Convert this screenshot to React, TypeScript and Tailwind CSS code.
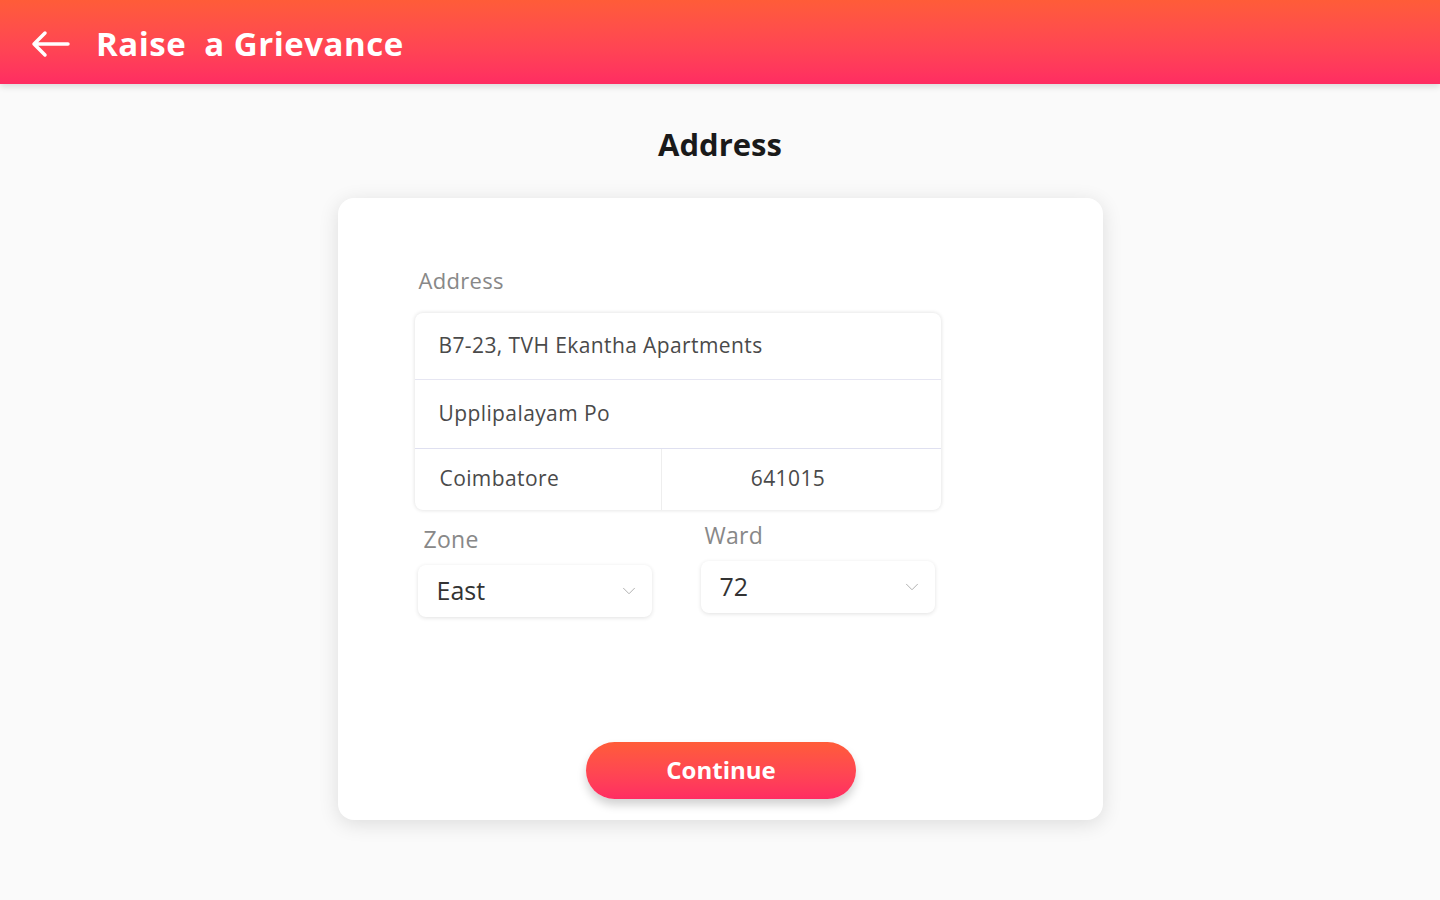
import { ChevronDown } from "lucide-react";

const font = { fontFamily: '"Open Sans", "Noto Sans", sans-serif' };

function Select({ value }: { value: string }) {
  return (
    <div className="flex h-[52px] w-[234px] items-center justify-between rounded-lg bg-white pl-[19px] pr-[12px] shadow-[0_1px_4px_rgba(0,0,0,0.12)]">
      <span className="text-[25px] text-[#333]">{value}</span>
      <ChevronDown size={22} strokeWidth={1} className="text-[#aaa]" />
    </div>
  );
}

export default function App() {
  return (
    <div className="min-h-[900px] bg-[#fafafa]" style={font}>
      <header className="flex h-[84px] items-center gap-[26px] bg-gradient-to-b from-[#ff5c38] to-[#ff2c62] pl-[30px] pt-[4px] shadow-[0_3px_6px_rgba(0,0,0,0.12)]">
        <svg width="40" height="28" viewBox="0 0 40 28" fill="none" stroke="white" strokeWidth="3.5" strokeLinecap="round" strokeLinejoin="round">
          <path d="M38 14H4M15 3L4 14l11 11" />
        </svg>
        <h1 className="text-[33px] font-bold tracking-[0.5px] text-white">Raise&nbsp; a Grievance</h1>
      </header>

      <h2 className="mt-[37px] text-center text-[31px] font-bold text-[#1a1a1a]">Address</h2>

      <div className="mx-auto mt-[30px] flex h-[622px] w-[765px] flex-col rounded-[16px] bg-white pl-[77px] pt-[66px] shadow-[0_4px_20px_rgba(0,0,0,0.12)]">
        <p className="pl-[4px] text-[22px] tracking-[0.3px] text-[#888]">Address</p>

        <div className="mt-[16px] w-[526px] overflow-hidden rounded-lg shadow-[0_0_4px_rgba(0,0,0,0.14)]">
          <div className="flex h-[67px] items-center border-b border-[#e6e6f2] pl-[24px] text-[21px] tracking-[0.4px] text-[#4a4a4a]">
            B7-23, TVH Ekantha Apartments
          </div>
          <div className="flex h-[69px] items-center border-b border-[#dfe0f0] pl-[24px] text-[21px] tracking-[0.4px] text-[#4a4a4a]">
            Upplipalayam Po
          </div>
          <div className="flex h-[61px] text-[21px] tracking-[0.4px] text-[#4a4a4a]">
            <div className="flex w-[247px] items-center border-r border-[#eee] pl-[25px]">Coimbatore</div>
            <div className="flex flex-1 items-center justify-center pr-[26px]">641015</div>
          </div>
        </div>

        <div className="mt-[8px] flex gap-[49px] pl-[3px]">
          <div className="flex flex-col gap-[9px] pt-[4px]">
            <span className="pl-[6px] text-[23px] tracking-[0.3px] text-[#888]">Zone</span>
            <Select value="East" />
          </div>
          <div className="flex flex-col gap-[9px]">
            <span className="pl-[4px] text-[23px] tracking-[0.3px] text-[#888]">Ward</span>
            <Select value="72" />
          </div>
        </div>

        <div className="mt-auto mb-[21px] -ml-[77px] flex justify-center">
          <button className="ml-[2px] h-[57px] w-[270px] rounded-full bg-gradient-to-b from-[#ff5c38] to-[#ff2c62] text-[24px] font-bold text-white shadow-[0_6px_10px_rgba(0,0,0,0.18)]">
            Continue
          </button>
        </div>
      </div>
    </div>
  );
}
